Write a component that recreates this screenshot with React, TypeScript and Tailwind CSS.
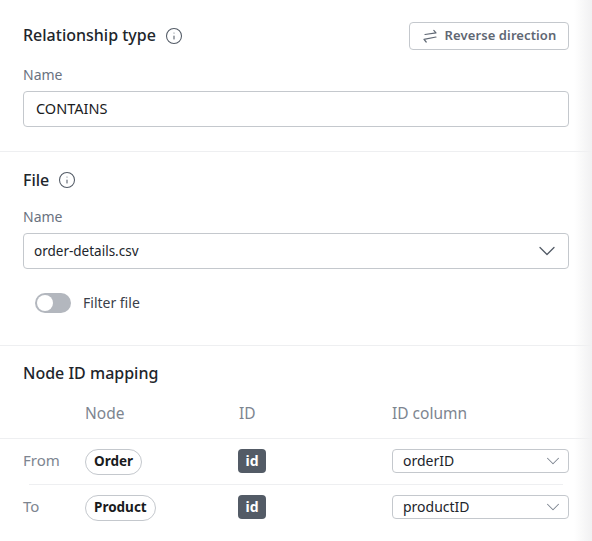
import React from 'react';
import { ChevronDown, Info } from 'lucide-react';

const font = "font-['Noto_Sans',sans-serif]";

const NodePill = ({ label }: { label: string }) => (
    <span className="flex pt-0.5">
        <span className="inline-flex h-[26px] items-center rounded-full border border-[#c4c8cd] px-2 text-[13.5px] font-bold text-[#1a1b1d]">{label}</span>
    </span>
);

const IdTag = () => (
    <span className="flex h-6 w-7 items-center justify-center rounded bg-[#535b66] text-sm font-bold text-white">id</span>
);

const ColumnSelect = ({ value }: { value: string }) => (
    <div className="flex h-6 w-[177px] items-center justify-between rounded border border-[#c4c8cd] pl-2.5 pr-1 text-sm text-[#21252b]">
        <span>{value}</span>
        <ChevronDown className="h-[22px] w-[22px] text-[#7d8590]" strokeWidth={1.1} />
    </div>
);

const SwapIcon = () => (
    <svg className="h-4 w-4" viewBox="0 0 16 16" fill="none" stroke="currentColor" strokeWidth="1.2" strokeLinecap="round" strokeLinejoin="round">
        <path d="M3 6.5 L14 4.8 L11.8 2.4" />
        <path d="M14 9 L2 11.3 L4.2 14" />
    </svg>
);

const App: React.FC = () => {
    return (
        <div className={`relative h-[541px] w-[592px] overflow-hidden bg-white ${font}`}>
            <section className="h-[152px] border-b border-[#eeeff1] px-[23px] pt-[22px]">
                <div className="flex h-[28px] items-center justify-between">
                    <div className="flex items-center gap-[9px]">
                        <h2 className="-mt-0.5 text-base font-medium text-[#21252b]">Relationship type</h2>
                        <Info className="h-[18px] w-[18px] text-[#535b66]" strokeWidth={1.4} />
                    </div>
                    <button className="flex h-[28px] w-[160px] items-center justify-center gap-[7px] rounded border border-[#c4c8cd] text-[13px] font-semibold tracking-[0.1px] text-[#5f6773]">
                        <SwapIcon />
                        Reverse direction
                    </button>
                </div>
                <label className="mt-[15px] block text-sm leading-5 text-[#6a7280]">Name</label>
                <div className="mt-[6px] flex h-9 items-center rounded border border-[#c4c8cd] px-3 text-[14.5px] text-[#1a1b1d]">CONTAINS</div>
            </section>

            <section className="h-[194px] border-b border-[#eeeff1] px-[23px] pt-[18px]">
                <div className="flex h-5 items-center gap-[9px]">
                    <h2 className="text-base font-medium text-[#21252b]">File</h2>
                    <Info className="h-[18px] w-[18px] text-[#535b66]" strokeWidth={1.4} />
                </div>
                <label className="mt-[17px] block text-sm leading-5 text-[#6a7280]">Name</label>
                <div className="mt-[6px] flex h-9 items-center justify-between rounded border border-[#c4c8cd] pl-2.5 pr-[7px] text-[13.5px] text-[#21252b]">
                    <span>order-details.csv</span>
                    <ChevronDown className="h-7 w-7 text-[#535b66]" strokeWidth={1.1} />
                </div>
                <div className="ml-3 mt-6 flex items-center gap-3">
                    <span className="flex h-5 w-9 items-center rounded-full bg-[#b3b7be] p-0.5">
                        <span className="h-4 w-4 rounded-full bg-white" />
                    </span>
                    <span className="text-sm text-[#3a4049]">Filter file</span>
                </div>
            </section>

            <section className="pt-[17px]">
                <h2 className="px-[23px] text-base font-medium leading-5 text-[#21252b]">Node ID mapping</h2>
                <div className="mt-[10px] grid h-[46px] grid-cols-[62px_153px_154px_1fr] items-center border-b border-[#eeeff1] pb-1 pl-[23px] pr-[23px] text-[15.5px] text-[#7d8590]">
                    <span />
                    <span>Node</span>
                    <span className="pl-px">ID</span>
                    <span>ID column</span>
                </div>
                <div className="mx-[29px] border-b border-[#eeeff1]">
                    <div className="-mx-1.5 grid h-[45px] grid-cols-[62px_153px_154px_1fr] items-center pb-0.5">
                        <span className="text-[15px] text-[#7d8590]">From</span>
                        <NodePill label="Order" />
                        <IdTag />
                        <ColumnSelect value="orderID" />
                    </div>
                </div>
                <div className="grid h-[45px] grid-cols-[62px_153px_154px_1fr] items-center px-[23px] pb-0.5">
                    <span className="text-[15px] text-[#7d8590]">To</span>
                    <NodePill label="Product" />
                    <IdTag />
                    <ColumnSelect value="productID" />
                </div>
            </section>

            {/* shadow of the panel next to this one */}
            <div className="pointer-events-none absolute inset-y-0 right-0 w-[18px] bg-gradient-to-r from-transparent to-[#f1f1f2]" />
        </div>
    );
};

export default App;
